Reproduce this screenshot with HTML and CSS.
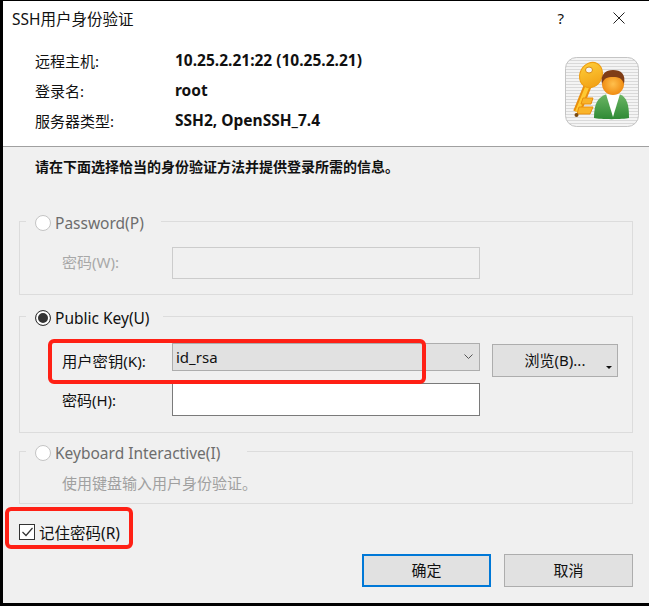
FILE: index.html
```html
<!DOCTYPE html>
<html lang="en">
<head>
    <meta charset="UTF-8">
    <title>SSH用户身份验证</title>
    <link rel="stylesheet" href="styles.css">
</head>
<body>
<div class="dialog">
    <div class="top">
        <div class="titlebar">
            <span class="title">SSH用户身份验证</span>
            <span class="help">?</span>
            <svg class="close" width="12" height="12" viewBox="0 0 12 12"><path d="M0.5 0.5L11.5 11.5M11.5 0.5L0.5 11.5" stroke="#222" fill="none"/></svg>
        </div>
        <div class="info">
            <div class="info-rows">
                <div class="info-row"><span class="info-label">远程主机:</span><b>10.25.2.21:22 (10.25.2.21)</b></div>
                <div class="info-row"><span class="info-label">登录名:</span><b>root</b></div>
                <div class="info-row"><span class="info-label">服务器类型:</span><b>SSH2, OpenSSH_7.4</b></div>
            </div>
            <svg class="user-icon" width="74" height="70" viewBox="0 0 74 70">
                <defs>
                    <pattern id="lines" width="4" height="3" patternUnits="userSpaceOnUse"><rect width="4" height="3" fill="#f4f4f4"/><rect width="4" height="1" fill="#d9d9d9"/></pattern>
                    <linearGradient id="gold" x1="0" y1="0" x2="1" y2="1"><stop offset="0" stop-color="#ffd23c"/><stop offset="1" stop-color="#f09a10"/></linearGradient>
                    <linearGradient id="shirt" x1="0" y1="0" x2="0" y2="1"><stop offset="0" stop-color="#6cb665"/><stop offset="1" stop-color="#2f8a35"/></linearGradient>
                    <radialGradient id="face"><stop offset="0" stop-color="#ffc04d"/><stop offset="1" stop-color="#f08c12"/></radialGradient>
                </defs>
                <rect x="0.5" y="0.5" width="73" height="69" rx="11" fill="url(#lines)" stroke="#c4c4c4"/>
                <path d="M23 28L12 55" stroke="#e98f0c" stroke-width="8" fill="none"/>
                <path d="M23 28L12 55" stroke="#ffc931" stroke-width="4" fill="none"/>
                <path d="M18 41h10l-2 6h-10zM14 50h14l-3 7H12z" fill="#f9b42a" stroke="#e98f0c"/>
                <circle cx="11.500" cy="58" r="2" fill="#7a4a10"/>
                <ellipse cx="26" cy="18" rx="11" ry="13" transform="rotate(28 26 18)" fill="url(#gold)" stroke="#ee9d12"/>
                <ellipse cx="24" cy="13" rx="3.500" ry="3" fill="#f4f4f4" stroke="#d98a10"/>
                <path d="M29 61C29 46 33 40 42 37L54 37C62 40 64 47 64 61C58 62.500 35 62.500 29 61Z" fill="url(#shirt)"/>
                <path d="M41 37H55L48 60Z" fill="#fff"/>
                <circle cx="48" cy="27" r="11" fill="url(#face)"/>
                <path d="M37 27C35 17 41 13 48 13C56 13 61 17 59 27C57 21 54 20 48 20C42 20 39 21 37 27Z" fill="#7f3d16"/>
            </svg>
        </div>
    </div>
    <div class="bottom">
        <p class="hint">请在下面选择恰当的身份验证方法并提供登录所需的信息。</p>

        <fieldset class="group group-password disabled">
            <legend><span class="radio"></span>Password(P)</legend>
            <div class="field">
                <label>密码(W):</label>
                <div class="input input-disabled"></div>
            </div>
        </fieldset>

        <fieldset class="group group-key">
            <legend><span class="radio checked"></span>Public Key(U)</legend>
            <div class="field field-select">
                <label>用户密钥(K):</label>
                <div class="select">id_rsa
                    <svg width="9" height="6" viewBox="0 0 9 6"><path d="M0.5 0.5L4.500 4.500L8.500 0.5" stroke="#555" fill="none"/></svg>
                </div>
                <button class="btn btn-browse">浏览(B)...<span class="caret"></span></button>
            </div>
            <div class="field">
                <label>密码(H):</label>
                <div class="input"></div>
            </div>
        </fieldset>

        <fieldset class="group group-keyboard disabled">
            <legend><span class="radio"></span>Keyboard Interactive(I)</legend>
            <div class="kbd-note">使用键盘输入用户身份验证。</div>
        </fieldset>

        <div class="remember">
            <span class="checkbox"><svg width="11" height="10" viewBox="0 0 11 10"><path d="M0.5 5L4 8.500L10.500 1" stroke="#333" stroke-width="1.200" fill="none"/></svg></span>
            记住密码(R)
        </div>

        <div class="actions">
            <button class="btn btn-ok">确定</button>
            <button class="btn">取消</button>
        </div>
    </div>
    <div class="mark mark-key"></div>
    <div class="mark mark-remember"></div>
</div>
</body>
</html>
```

FILE: styles.css
```css
* {
  box-sizing: border-box;
}

html, body {
  margin: 0;
  height: 606px;
  overflow: hidden;
  background-color: #000;
}

body {
  padding: 1px 0 3px 3px;
  font-family: "Noto Sans", "Noto Sans CJK SC", sans-serif;
  font-size: 15px;
  color: #111;
}

.dialog {
  position: relative;
  height: 602px;
  display: flex;
  flex-direction: column;
  background-color: #f0f0f0;
}

.top {
  height: 146px;
  background-color: #fff;
  border-bottom: 1px solid #a0a0a0;
}

.titlebar {
  height: 34px;
  display: flex;
  align-items: center;
  padding-left: 9px;
}

.title {
  flex: 1;
  font-size: 15.500px;
}

.help {
  margin-right: 49px;
}

.close {
  margin-right: 24px;
}

.info {
  display: flex;
  padding-left: 32px;
}

.info-rows {
  flex: 1;
  padding-top: 10px;
}

.info-row {
  height: 30px;
  display: flex;
  align-items: center;
}

.info-row b {
  font-size: 15.500px;
}

.info-label {
  width: 140px;
}

.user-icon {
  margin: 22px 10px 0 0;
}

.bottom {
  flex: 1;
  padding: 11px 16px 0;
}

.hint {
  margin: 0 0 33px 16px;
  font-weight: bold;
  font-size: 14px;
  line-height: 18px;
}

.group {
  margin: 0;
  padding: 0;
  width: 614px;
  border: 1px solid #dcdcdc;
  min-inline-size: 0;
}

.group legend {
  margin-left: 6px;
  padding: 4px 0 0 9px;
  display: flex;
  align-items: center;
  gap: 4px;
  height: 24px;
  font-size: 15.500px;
}

.disabled legend {
  color: #6d6d6d;
}

.group-password {
  height: 86px;
}

.group-password legend {
  width: 135px;
}

.group-key {
  height: 129px;
  margin-top: 9px;
}

.group-key legend {
  width: 137px;
}

.group-keyboard {
  height: 65px;
  margin-top: 6px;
}

.group-keyboard legend {
  width: 221px;
}

.radio {
  width: 16px;
  height: 16px;
  border-radius: 50%;
  border: 1px solid #c4c4c4;
  background-color: #fff;
  flex: none;
}

.radio.checked {
  border-color: #333;
  box-shadow: inset 0 0 0 2px #fff, inset 0 0 0 8px #333;
}

.field {
  display: flex;
  align-items: center;
  padding-left: 42px;
}

.field label {
  width: 110px;
}

.disabled .field label {
  color: #a8a8a8;
  margin-bottom: 4px;
}

.group-password .field {
  margin-top: 14px;
}

.group-key .field-select {
  margin-top: 15px;
  height: 40px;
  align-items: flex-start;
}

.field-select label {
  margin-top: 6px;
  font-size: 15.300px;
}

.input {
  width: 308px;
  height: 33px;
  border: 1px solid #7a7a7a;
  background-color: #fff;
}

.input-disabled {
  height: 32px;
  border-color: #ccc;
  background-color: #f0f0f0;
}

.select {
  width: 308px;
  height: 28px;
  border: 1px solid #adadad;
  background-color: #e1e1e1;
  display: flex;
  align-items: center;
  justify-content: space-between;
  padding: 0 6px 0 3px;
}

.btn {
  position: relative;
  width: 129px;
  height: 33px;
  border: 1px solid #adadad;
  background-color: #e1e1e1;
  font: inherit;
  color: #111;
  padding: 0 0 2px;
}

.btn-browse {
  width: 126px;
  margin: 1px 0 0 12px;
}

.caret {
  position: absolute;
  right: 5px;
  bottom: 7px;
  border: 3px solid transparent;
  border-top-color: #111;
  border-bottom-width: 0;
}

.kbd-note {
  padding: 9px 0 0 42px;
  color: #a0a0a0;
}

.remember {
  display: flex;
  align-items: center;
  gap: 4px;
  margin: 18px 0 0 0;
  height: 20px;
  font-size: 15.500px;
}

.checkbox {
  width: 16px;
  height: 16px;
  border: 1px solid #333;
  background-color: #fff;
  display: flex;
  align-items: center;
  justify-content: center;
}

.actions {
  display: flex;
  justify-content: flex-end;
  gap: 13px;
  margin-top: 12px;
}

.btn-ok {
  border: 2px solid #0078d7;
}

.mark {
  position: absolute;
  border: 4px solid #ff2015;
  border-radius: 6px;
}

.mark-key {
  left: 45px;
  top: 338px;
  width: 378px;
  height: 45px;
}

.mark-remember {
  left: 2px;
  top: 506px;
  width: 128px;
  height: 42px;
}
```
